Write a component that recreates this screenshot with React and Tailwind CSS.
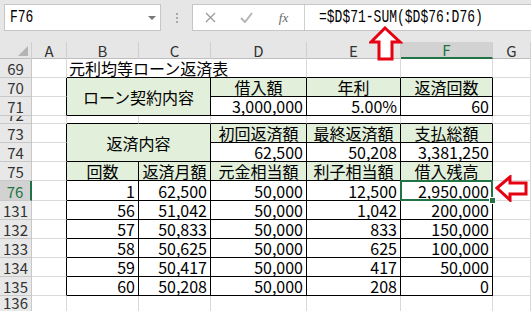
import React from "react";

const GL = "border-r border-b border-[#d9d9d9]";
const TB = "border-r border-b border-black";
const LEFT = "border-r border-b border-r-black border-b-[#d9d9d9]";
const TOP = "border-r border-b border-r-[#d9d9d9] border-b-black";
const GREEN = "bg-[#e2efda]";

const Rh = ({ n, sel }) => (
  <div
    className={`flex items-end justify-center overflow-hidden pb-px leading-none text-[15px] border-b border-[#c8c8c8] ${
      sel
        ? "bg-[#d2d2d2] text-[#217346] border-r-2 border-r-[#217346]"
        : "bg-[#e8e8e8] text-[#333] border-r border-r-[#c8c8c8]"
    }`}
  >
    {n}
  </div>
);

const Cell = ({ className = "", right, left, mid, children }) => (
  <div
    className={`flex leading-none whitespace-nowrap ${mid ? "items-center" : "items-end pb-px"} ${
      right ? "justify-end pr-[3px]" : left ? "justify-start pl-[2px]" : "justify-center"
    } ${className}`}
  >
    {children}
  </div>
);

const data = [
  ["76", "1", "62,500", "50,000", "12,500", "2,950,000"],
  ["131", "56", "51,042", "50,000", "1,042", "200,000"],
  ["132", "57", "50,833", "50,000", "833", "150,000"],
  ["133", "58", "50,625", "50,000", "625", "100,000"],
  ["134", "59", "50,417", "50,000", "417", "50,000"],
  ["135", "60", "50,208", "50,000", "208", "0"],
];

const cols = ["A", "B", "C", "D", "E", "F", "G"];

export default function App() {
  return (
    <div className="relative w-[531px] h-[311px] overflow-hidden bg-white text-black font-['Noto_Sans_CJK_JP',sans-serif]">
      {/* formula bar */}
      <div className="flex items-start h-[42px] bg-[#e6e6e6] pt-[4px] pl-[4px]">
        <div className="flex items-center justify-between w-[157px] h-[27px] bg-white border border-[#c6c6c6] pl-[5px] pr-[4px]">
          <span className="font-['Liberation_Mono',monospace] text-[13px] scale-y-[1.35] inline-block">F76</span>
          <span className="w-0 h-0 border-l-[4px] border-r-[4px] border-t-[4px] border-l-transparent border-r-transparent border-t-[#777]" />
        </div>
        <div className="flex flex-col items-center justify-center gap-[2px] w-[31px] h-[27px]">
          <span className="w-[2px] h-[2px] bg-[#aaa]" />
          <span className="w-[2px] h-[2px] bg-[#aaa]" />
          <span className="w-[2px] h-[2px] bg-[#aaa]" />
        </div>
        <div className="flex flex-1 items-center h-[27px] bg-white border border-r-0 border-[#c6c6c6]">
          <div className="flex items-center w-[112px] h-full border-r border-[#d0d0d0]">
            <div className="flex w-[35px] justify-center">
              <svg width="11" height="11" viewBox="0 0 11 11">
                <path d="M1 1L10 10M10 1L1 10" stroke="#9a9a9a" strokeWidth="1.3" />
              </svg>
            </div>
            <div className="flex w-[37px] justify-center">
              <svg width="13" height="11" viewBox="0 0 13 11">
                <path d="M1 6L5 10L12 1" stroke="#b5b5b5" strokeWidth="2" fill="none" />
              </svg>
            </div>
            <div className="flex w-[37px] justify-center font-['Liberation_Serif',serif] italic text-[13px] text-[#666]">
              fx
            </div>
          </div>
          <span className="pl-[14px] font-['Liberation_Mono',monospace] text-[13px] scale-y-[1.35] inline-block origin-left">
            =$D$71-SUM($D$76:D76)
          </span>
        </div>
      </div>

      {/* column headers */}
      <div className="grid grid-cols-[32px_35px_72px_72px_96px_94px_92px_1fr] h-[17px] bg-[#e6e6e6] border-b border-[#bdbdbd]">
        <div className="flex items-end justify-end pr-[3px] pb-[3px] border-r border-[#cfcfcf]">
          <svg width="10" height="10" viewBox="0 0 10 10">
            <path d="M10 0L10 10L0 10Z" fill="#b4b4b4" />
          </svg>
        </div>
        {cols.map((c) => (
          <div
            key={c}
            className={`flex items-center justify-center leading-none text-[15px] ${
              c === "F"
                ? "bg-[#d2d2d2] text-[#217346] border-b-2 border-[#217346] border-r border-r-[#cfcfcf]"
                : "text-[#333] border-r border-[#cfcfcf]"
            }`}
          >
            {c}
          </div>
        ))}
      </div>

      {/* sheet */}
      <div className="grid grid-cols-[32px_35px_72px_72px_96px_94px_92px_1fr] grid-rows-[19px_19px_19px_8px_19px_19px_19px_20px_19px_19px_19px_19px_19px_16px] text-[16px]">
        {/* 69 */}
        <Rh n="69" />
        <Cell className={GL} />
        <Cell left className="col-span-3 border-b border-r border-b-black border-r-[#d9d9d9]">
          元利均等ローン返済表
        </Cell>
        <Cell className={TOP} />
        <Cell className={TOP} />
        <Cell className={GL} />

        {/* 70 */}
        <Rh n="70" />
        <Cell className={LEFT} />
        <Cell mid className={`col-span-2 row-span-2 ${TB} ${GREEN}`}>ローン契約内容</Cell>
        <Cell className={`${TB} ${GREEN}`}>借入額</Cell>
        <Cell className={`${TB} ${GREEN}`}>年利</Cell>
        <Cell className={`${TB} ${GREEN}`}>返済回数</Cell>
        <Cell className={GL} />

        {/* 71 */}
        <Rh n="71" />
        <Cell className={LEFT} />
        <Cell right className={TB}>3,000,000</Cell>
        <Cell right className={TB}>5.00%</Cell>
        <Cell right className={TB}>60</Cell>
        <Cell className={GL} />

        {/* 72 */}
        <Rh n="72" />
        <Cell className={GL} />
        <Cell className={TOP} />
        <Cell className={TOP} />
        <Cell className={TOP} />
        <Cell className={TOP} />
        <Cell className={TOP} />
        <Cell className={GL} />

        {/* 73 */}
        <Rh n="73" />
        <Cell className={LEFT} />
        <Cell mid className={`col-span-2 row-span-2 ${TB} ${GREEN}`}>返済内容</Cell>
        <Cell className={`${TB} ${GREEN}`}>初回返済額</Cell>
        <Cell className={`${TB} ${GREEN}`}>最終返済額</Cell>
        <Cell className={`${TB} ${GREEN}`}>支払総額</Cell>
        <Cell className={GL} />

        {/* 74 */}
        <Rh n="74" />
        <Cell className={LEFT} />
        <Cell right className={TB}>62,500</Cell>
        <Cell right className={TB}>50,208</Cell>
        <Cell right className={TB}>3,381,250</Cell>
        <Cell className={GL} />

        {/* 75 */}
        <Rh n="75" />
        <Cell className={LEFT} />
        <Cell className={`${TB} ${GREEN}`}>回数</Cell>
        <Cell className={`${TB} ${GREEN}`}>返済月額</Cell>
        <Cell className={`${TB} ${GREEN}`}>元金相当額</Cell>
        <Cell className={`${TB} ${GREEN}`}>利子相当額</Cell>
        <Cell className={`${TB} ${GREEN}`}>借入残高</Cell>
        <Cell className={GL} />

        {data.map((r, i) => (
          <React.Fragment key={r[0]}>
            <Rh n={r[0]} sel={i === 0} />
            <Cell className={LEFT} />
            <Cell right className={TB}>{r[1]}</Cell>
            <Cell right className={TB}>{r[2]}</Cell>
            <Cell right className={TB}>{r[3]}</Cell>
            <Cell right className={TB}>{r[4]}</Cell>
            <Cell right className={`${TB} relative`}>
              {r[5]}
              {i === 0 && (
                <>
                  <span className="absolute -inset-px z-10 border-2 border-[#217346]" />
                  <span className="absolute -right-[4px] -bottom-[4px] z-20 w-[7px] h-[7px] bg-[#217346] border border-white" />
                </>
              )}
            </Cell>
            <Cell className={GL} />
          </React.Fragment>
        ))}

        {/* 136 */}
        <Rh n="136" />
        <Cell className={GL} />
        <Cell className={GL} />
        <Cell className={GL} />
        <Cell className={GL} />
        <Cell className={GL} />
        <Cell className={GL} />
        <Cell className={GL} />
      </div>

      {/* red arrows */}
      <svg className="absolute left-[369px] top-[26px] z-30" width="34" height="36" viewBox="0 0 34 36">
        <polygon points="16,2 31,16 23,16 23,33 10,33 10,16 2,16" fill="#fff" stroke="#e60012" strokeWidth="3" />
      </svg>
      <svg className="absolute left-[495px] top-[175px] z-30" width="34" height="27" viewBox="0 0 34 27">
        <polygon points="2,13 15,2 15,8 31,8 31,19 15,19 15,25" fill="#fff" stroke="#e60012" strokeWidth="3" />
      </svg>
    </div>
  );
}
